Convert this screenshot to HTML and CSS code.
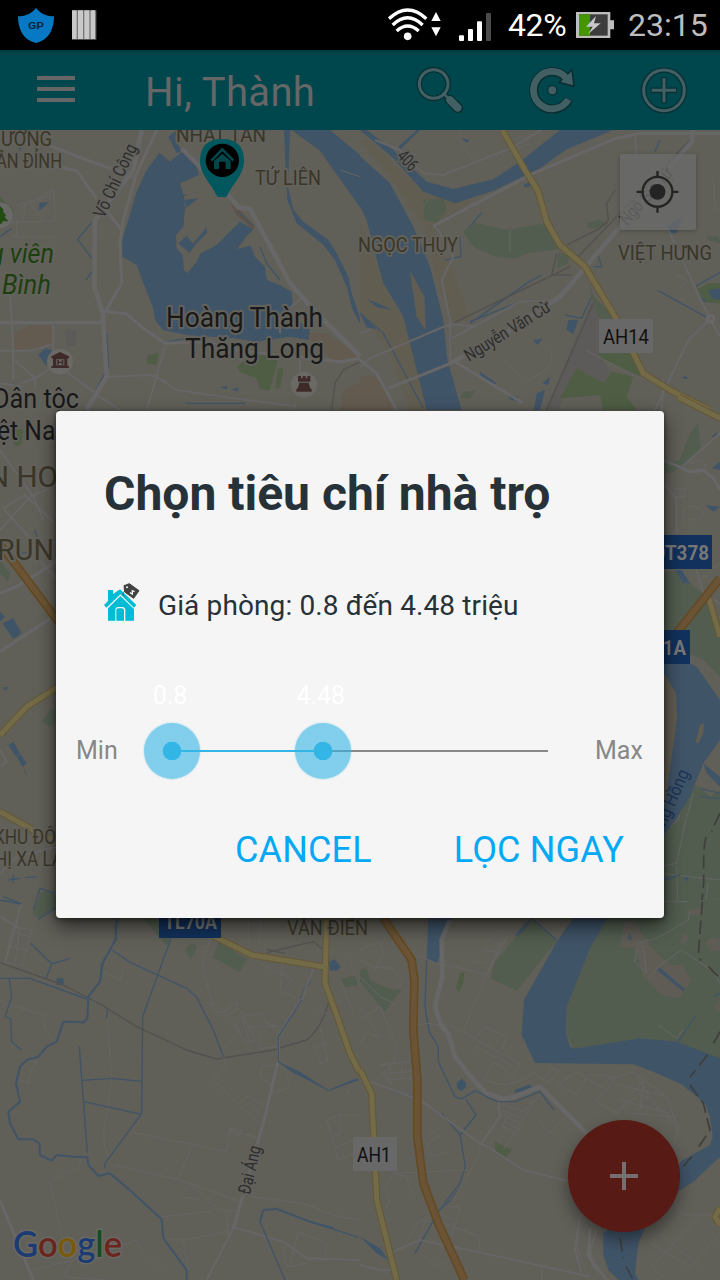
FILE: index.html
```html
<!DOCTYPE html>
<html lang="vi">
<head>
<meta charset="utf-8">
<title>Chọn tiêu chí nhà trọ</title>
<link rel="stylesheet" href="styles.css">
</head>
<body>
<div class="screen">
  <header class="status">
    <div class="status-group">
      <svg class="shield" viewBox="51 0 114 150"><path d="M108 23C98 38 78 49 54 49C54 88 70 121 108 129C146 121 162 88 162 49C138 49 118 38 108 23Z" fill="#0778c4"/><text class="shield-text" x="84" y="88" textLength="48" lengthAdjust="spacingAndGlyphs">GP</text></svg>
      <svg class="bars" viewBox="213 0 78 150"><path d="M216 31H289V119H216Z" fill="#777"/><path d="M216 31h14v86h-14zM234 31h15v86h-15zM253 31h15v86h-15zM272 31h13v86h-13z" fill="#c8c8c8"/></svg>
    </div>
    <div class="status-group status-right">
      <svg class="wifi" viewBox="84 0 162 150"><g fill="none" stroke="#fff" stroke-width="10"><path d="M87 56Q143 4 199 56"/><path d="M98 75Q143 32 188 75"/><path d="M110 93Q143 63 176 93"/></g><circle cx="143" cy="109" r="11.500" fill="#fff"/><path d="M228 36L242 63H214ZM214 82H242L228 109Z" fill="#fff"/></svg>
      <svg class="signal" viewBox="294 0 102 150"><g fill="#fff"><rect x="297" y="106" width="15" height="17" rx="3"/><rect x="324" y="87" width="15" height="36" rx="3"/><rect x="351" y="64" width="15" height="59" rx="3"/></g><rect x="378" y="39" width="15" height="84" rx="3" fill="#4b4b4b"/></svg>
      <span class="percent">42%</span>
      <svg class="battery" viewBox="645 0 120 150"><path d="M648 36H751V61H762V88H751V114H648Z" fill="#bdbdbd"/><rect x="657" y="43" width="86" height="64" fill="#3d3d3d"/><rect x="657" y="43" width="33" height="64" fill="#459600"/><path d="M708 48L678 80H698L684 103L722 70H702Z" fill="#c8c8c8"/></svg>
      <span class="clock">23:15</span>
    </div>
  </header>

  <div class="toolbar">
    <svg class="menu" viewBox="111 150 114 240"><path d="M111 228h114v12H111zM111 261h114v12H111zM111 294h114v12H111z" fill="#666"/></svg>
    <span class="greeting">Hi, Thành</span>
    <div class="actions">
      <svg viewBox="165 195 150 150"><g fill="none" stroke-linecap="round"><path d="M250 280L263 293" stroke="#0a3034" stroke-width="15"/><path d="M269 299L294 324" stroke="#0a3034" stroke-width="31"/><circle cx="221" cy="252" r="43" stroke="#0a3034" stroke-width="17"/><circle cx="221" cy="252" r="43" stroke="#426064" stroke-width="9"/><path d="M250 280L263 293" stroke="#426064" stroke-width="8"/><path d="M270 300L293 323" stroke="#426064" stroke-width="23"/></g></svg>
      <svg viewBox="501 195 150 150"><path d="M627 297A56 56 0 1 1 614 229" fill="none" stroke="#0a3034" stroke-width="28"/><path d="M597 247L636 209L642 259Z" fill="#426064" stroke="#0a3034" stroke-width="5" stroke-linejoin="round"/><path d="M625 298A56 56 0 1 1 618 233" fill="none" stroke="#426064" stroke-width="20"/><circle cx="577" cy="271" r="14" fill="#426064" stroke="#0a3034" stroke-width="4"/></svg>
      <svg viewBox="837 195 150 150"><g fill="none" stroke="#0a3034"><circle cx="912" cy="271" r="61" stroke-width="17"/><path d="M872 271H951M912 232V310" stroke-width="17"/></g><g fill="none" stroke="#426064"><circle cx="912" cy="271" r="61" stroke-width="9"/><path d="M875 271H948M912 235V307" stroke-width="9"/></g></svg>
    </div>
  </div>

  <main class="map">
    <svg class="canvas" viewBox="0 130 720 1150">
      <rect y="130" width="720" height="1150" fill="#605f58"/>

      <!-- north-west: lake, old quarter -->
      <g transform="translate(0 120) scale(.333333)">
        <path class="urban" d="M40 640L90 617L158 617V680L40 690ZM925 640L980 640L1080 710V720L1000 720L930 660ZM1030 810L1080 790V870H1020Z"/>
        <path class="water" d="M478 98L510 125L545 95L585 118L597 165L540 190L550 222L597 237L555 265L550 320L528 345L530 385L548 405L552 450L562 460L590 425L602 400L650 375L720 305L760 328L738 350L712 387L752 377L765 410L795 440L800 480L840 495L875 515L878 550L860 575L930 630L925 660L870 650L770 665L700 655L560 645L490 630L465 600L460 565L430 490L410 435L368 410L366 360L385 300L410 215L440 150ZM505 50L530 30L525 60L545 92L530 100Z"/>
        <path class="land" d="M552 228L597 215L600 245L555 262Z"/>
        <path class="water" d="M535 370L560 348L585 378L568 398ZM578 372L620 322V340L585 375ZM552 240L595 235L560 262ZM118 248L148 245L118 272ZM115 705L135 685L155 690L140 738ZM875 30L960 92L1080 262V105L990 30ZM852 30L870 30L864 200L880 270L910 305L985 360L1010 400L1045 470L1055 520L1080 595V610L1058 570L1040 500L1005 420L970 375L890 310L862 240ZM660 802L680 797L682 808ZM695 808L717 802L712 815Z"/>
        <path class="canal" d="M275 308L233 358L275 415M275 455L258 482M305 570L380 582L430 625L490 668L560 655M320 640L326 740L255 870M0 350L35 325M780 380L800 430L840 480M555 850H735M40 50L60 90L85 45"/>
        <path class="park" d="M712 740L760 700L830 697L832 730L808 812L780 808L770 775L720 755ZM832 745L850 745L840 805H826ZM442 705L475 700L470 735L442 730ZM0 230L40 270L40 290L0 300Z"/>
        <path class="grey" d="M197 630H228V675L197 680Z"/>
        <path class="shore" d="M690 250L710 285L760 330L765 318L715 265Z"/>
        <path class="canal" d="M714 275L758 318"/>
        <path class="lane" d="M60 265L160 208L165 302L0 308M50 255L155 225M70 300L75 250M35 350L165 352M50 305V350M90 250L130 300M1020 150L1080 170"/>
        <path class="street" d="M30 530L38 640L40 780M0 692H95L160 672V615M160 675V740L105 775V800M45 720L105 775L60 790M200 755L300 830L360 870M325 770L450 765L500 785M495 680L440 870M0 790L70 800M840 640L840 590L905 535M885 850L888 870M460 765L530 810L700 835L885 858M900 720V760"/>
        <path class="road" d="M120 65L260 120L400 170M110 130L230 152L285 230L365 330M470 30L408 165L370 300L360 370L365 490L318 572M0 608H305M305 572L380 582L430 625L495 670L620 665L700 690L1020 725L1080 715"/>
        <path class="main" d="M425 30L400 150L285 300L283 500L308 580L320 770L258 870M545 85L640 180L690 232L715 262L750 267L790 340L870 490L960 590L1080 708"/>
        <path class="rail" d="M1080 725L1030 750L1005 790L995 870"/>
        <g><circle cx="0" cy="286" r="39" fill="#696968"/><path d="M0 258L12 270L8 274L18 286L14 290L25 304H7V311H-5V258Z" fill="#224d12"/></g>
        <g><circle cx="180" cy="725" r="39" fill="#6b6965"/><path d="M154 715V709L180 696L207 709V715H202V738H207V744H154V738H159V715ZM169 718V736H193V718Z" fill="#3e2b29" fill-rule="evenodd"/><path d="M172 720h5v5h8v-5h5v14h-5v-5h-8v5h-5z" fill="#3e2b29"/></g>
        <g><circle cx="912" cy="794" r="39" fill="#6b6965"/><path d="M894 768h9v7h5v-7h9v7h5v-7h9v17h-37zM898 788h28l5 18h4v9h-46v-9h4z" fill="#3e2b29"/></g>
      </g>

      <!-- north-east: river branches, Long Biên -->
      <g transform="translate(360 120) scale(.333333)">
        <path class="urban" d="M0 770H55L100 870H0Z"/>
        <path class="sandbank" d="M0 60L90 170L200 330L225 460L280 610L330 600L270 430L215 320L340 240L290 248L190 215L25 60ZM0 300L60 470L130 600L170 740L200 870H150L90 700L0 570Z"/>
        <path class="water" d="M0 108L90 190L160 320L210 440L250 600L262 720L305 870H200L165 730L130 590L70 490L48 410L20 300L0 258ZM0 30H20L100 90L200 185L280 207L400 178L480 125L600 30H760L620 88L540 145L400 212L285 250L190 215L100 115ZM115 80L170 30H180L120 90ZM0 580L20 600L50 628L20 622ZM20 538L60 552L95 570L50 562ZM625 600H655L640 642L620 630ZM520 660L548 656L532 675ZM360 755L410 790L400 797L362 770ZM440 818L475 832V845L450 838ZM548 790L570 770L565 795ZM530 820L555 810L540 870H522ZM430 400L463 404L460 415L428 412ZM920 318L965 290L950 340H925ZM305 55L330 60L320 68ZM490 195L520 180L530 192L495 203ZM1030 505L1080 500V550L1030 545ZM965 775L975 767L987 777Z"/>
        <path class="sandbank" d="M150 453L193 530L197 630L170 590Z"/>
        <path class="canal" d="M365 278L320 330M300 350L303 410L255 420M695 530L665 595L615 585M715 408L725 440L700 440M895 512L1045 595M1080 458L1005 500L1030 545L1080 540M900 60L885 95M545 465L500 490L330 610M0 580L70 640L190 865M775 700L800 740M590 540L480 545L330 605"/>
        <path class="green" d="M190 240L250 235L260 270L230 308L195 300ZM310 335L345 308L440 330L560 310L610 375L620 385L500 400L465 415L410 412L340 380ZM680 310L715 300L745 310L720 325L685 325ZM595 395L630 410L625 430L590 445ZM1040 350L1075 350L1080 370L1045 360ZM685 490L705 535L775 600L715 600ZM310 815L345 812L330 835L300 835Z"/>
        <path class="grey" d="M695 545L720 600L718 700L750 755L730 790L650 745L595 870H555Z"/>
        <path class="park" d="M650 745L730 790L755 755L820 770L800 830L830 870H730L720 825L600 835ZM715 700H820L840 770L720 715ZM1010 510L1045 490L1080 490V505L1045 510L1055 535L1080 540V550L1040 545Z"/>
        <path class="rail" d="M700 550L560 870M283 608L630 440M620 375L720 325L745 300L740 250L765 210M575 465L590 400M575 465H635M990 60L655 410"/>
        <path class="lane" d="M470 85L510 70L490 50L460 60M300 30L300 65L345 125M450 330V400M435 725L495 780M560 685L575 700L570 740L510 780M1060 170L1065 270L1080 270M950 465L985 485L960 500M675 690L850 780M950 530L975 540M190 260L205 240"/>
        <path class="street" d="M45 60L120 90L190 160L250 165L450 85L545 30M220 318L235 330L280 410L245 480L270 600V720M0 740L30 715L270 612L350 620M275 655L480 545L590 540M30 630L0 640M825 45L830 110L890 160M880 305L925 330L1050 597L1080 650M1050 597L985 660L885 870M910 780L905 870"/>
        <path class="road" d="M1080 40H840L760 58L520 160L220 318M0 720L50 760L110 870M85 805L285 725L490 850"/>
        <path class="main" d="M1000 30L995 65L665 455L600 530L420 650L270 730"/>
        <path class="yellow-edge" d="M427 30L495 150L535 215L560 305L600 375L675 440L765 590L850 760L930 810L1050 870"/>
        <path class="yellow" d="M427 30L495 150L535 215L560 305L600 375L675 440L765 590L850 760L930 810L1050 870"/>
        <circle cx="1051" cy="597" r="11" fill="none" stroke="#6a696a" stroke-width="7"/>
      </g>

      <!-- west edge -->
      <g transform="translate(0 400) scale(.333333)">
        <path class="water" d="M8 670L40 655L65 700L40 718ZM0 635L15 650L0 665ZM25 1035L40 1025L60 1060L48 1070ZM50 1070L62 1062L80 1090L68 1102ZM72 1105L82 1130L75 1120ZM8 862H26L15 872Z"/>
        <path class="park" d="M30 80L70 90L65 130L50 140L35 120Z"/>
        <path class="green" d="M0 480L30 520L25 545L0 520ZM125 965L150 930L175 920V965L150 980ZM120 1480L150 1470L175 1500V1530L110 1530Z"/>
        <path class="street" d="M0 150L100 290L130 360M10 325L75 285L165 370M10 325L85 410M0 390L90 290L170 255M0 1100L20 1085L0 1050M0 1420L50 1370L170 1340M120 480L170 540"/>
        <path class="road" d="M0 580L60 555L175 480M0 755L175 640"/>
        <path class="orange-edge" d="M0 435L40 485L175 665"/><path class="orange" d="M0 435L40 485L175 665"/>
        <path class="yellow-edge" d="M0 1005L80 920L175 860M0 1235L90 1285L175 1330"/><path class="yellow" d="M0 1005L80 920L175 860M0 1235L90 1285L175 1330"/>
        <path class="canal" d="M105 390L110 410M65 460L110 450M25 1440L60 1435M40 1425V1450M75 1433L110 1430M10 1490L60 1510M120 1465L165 1480M120 1465L100 1530"/>
      </g>

      <!-- east edge -->
      <g transform="translate(660 400) scale(.333333)">
        <path class="green" d="M115 70L122 150L65 200L30 220L0 210V195L60 180L90 100ZM0 520L60 510L100 560L150 590L180 690V830L130 780L60 750L0 750ZM70 1150L120 1160L150 1190L180 1170V1560H0V1300L60 1260Z"/>
        <path class="water" d="M0 780H70L110 800L180 900V1020L130 1090L90 1190L50 1255L0 1320V850L50 880L55 950L20 1200L0 1260ZM155 110L172 95L168 115ZM155 205L180 185V210ZM135 315L180 320L160 335ZM45 510H65L90 550L70 550ZM130 1090L180 1130V1160L140 1120ZM70 1435L85 1425V1445Z"/>
        <path class="sand" d="M0 810L15 825L48 880L52 950L15 1210L0 1240ZM120 975L132 970L130 1000L115 1030L107 1025Z"/>
        <path class="lane" d="M45 265H75V290H45V265M60 260V290M70 330Q90 310 120 325Q140 345 120 360H70ZM90 190L130 180L140 210L100 220M0 1400L50 1390L75 1270L100 1180M0 1420L180 1440M50 1400L55 1560M130 1560L145 1450M0 1510L180 1500M110 550L180 490"/>
        <path class="street" d="M0 240L50 295V400M65 200L180 100M110 510L130 580L180 610"/><path class="road" d="M0 175L90 215L130 210L160 235L175 260L180 270"/>
        <path class="yellow-edge" d="M55 -10L180 55M145 590L180 710"/><path class="yellow" d="M55 -10L180 55M145 590L180 710"/>
        <path class="orange-edge" d="M45 705L180 535"/><path class="orange" d="M45 705L180 535"/>
        <path class="canal" d="M120 1165L180 1180M120 1190L180 1195M15 1440L60 1425M10 1440L25 1430"/>
        <path class="border" d="M180 1240Q160 1280 155 1295M138 1310Q130 1340 131 1400V1450Q125 1510 120 1560"/>
      </g>

      <!-- south-west -->
      <g transform="translate(0 900) scale(.333333)">
        <path class="green" d="M110 0H165V20L115 58L98 40ZM430 55L500 137L515 110L480 60ZM555 150L575 130L592 140L572 180ZM640 170L655 125L742 178L718 216L632 168ZM1022 238L1070 225L1080 255L1035 262Z"/>
        <path class="water" d="M170 235L190 235L192 255H170ZM988 185L1005 178L1022 200L1010 212H990ZM938 205L930 250L902 300L900 295L925 240ZM835 485L900 515L985 570L1070 535L1078 540L985 573L890 523Z"/>
        <path class="rail" d="M0 188L190 255L300 312L410 380L560 450L650 477L820 450L920 420Q965 385 985 310M800 148L855 160M800 158L940 125L965 145"/>
        <path class="lane" d="M0 300L50 320L130 345L135 385L155 420M65 480L110 485L95 510L85 550L60 540M38 80L95 88L70 195L15 190ZM50 100L90 110M35 140L80 150M60 80L45 190M320 330L335 535M335 535L320 640Q300 720 325 770M310 215L360 240L370 210M640 100L605 180L640 330L665 340L710 305L712 330L680 345M745 60V120M785 55L775 125M848 185L840 270L900 300M780 190L880 240L855 260M605 330L645 310L720 390L675 440M725 350L785 340L800 370L840 380M740 380L830 380M725 350L750 430M780 390V445L840 440M720 330L765 420L740 430L700 370M640 540L680 495L670 470M640 540L780 675M785 500Q770 540 810 550L820 580L870 560L850 490ZM720 610L740 588L790 615M750 605L780 640M395 697L680 755L690 685L725 690L715 710L690 695M690 690L770 712M575 740L535 835M345 795L540 840L720 905M540 890L570 850L620 900L670 935L710 930M545 890L600 900M150 845L240 800V770M150 845L185 1010M488 950L630 935L640 920M490 1020L550 1020L565 1110L545 1120M550 1022L680 995M680 935L685 1010M100 1110L220 1080L190 1130L320 1140M220 1080L410 1020L430 1060L500 1120M750 890L910 910L1000 945L1080 960M980 660L1015 645H1080M980 660L1015 780L1060 760M1020 650V705L995 710M1005 745L1060 720M1060 600L1040 570M985 300L1020 340L1010 350L950 330M960 380L970 430L985 485L960 490L945 440L980 430M1020 240L1060 340M1045 170L1080 260M870 1090L895 995L980 1030L975 1075L920 1080M850 1040L860 1100L920 1090"/>
        <path class="street" d="M0 50L60 85M65 10L15 190M700 985L620 1140M700 982L850 1025L920 1075L1080 1080M940 205L905 300"/>
        <path class="road" d="M0 900L100 1140M835 480L795 650L725 900L700 985M905 300L880 335L835 410V480"/>
        <path class="canal" d="M0 235H90L260 297M28 237L35 290L15 350L32 357L35 425L65 450M92 130L155 192L210 175M155 192L138 235M355 55L345 85L348 120L305 190L300 245L265 290M337 150L390 187L560 265L590 292L640 390L670 470M513 115L428 350L425 640L315 790V805M238 440L262 760M248 541L335 535L425 544M252 605L425 643M322 325L320 355M1075 1012L930 965M780 965L855 1140M835 410L905 300M835 410V485L890 523M0 0L65 12M115 58L165 25"/>
        <path class="stream" d="M350 60L347 118L308 190L300 245L265 290L262 355L250 367L190 365L170 425L140 440L115 470L80 480L60 500L48 550L60 605L25 635L30 670L55 718L100 718L118 730L120 765L155 782L170 765L220 770L262 772L265 795L295 828L330 820L400 880L485 958L490 1015L560 1110V1140M1000 985L930 965L830 927L790 930L780 965"/>
        <path class="yellow-edge" d="M640 108L755 165L970 200M980 55L975 250L1010 345L1050 460L1080 520"/><path class="yellow" d="M640 108L755 165L970 200M980 55L975 250L1010 345L1050 460L1080 520"/>
      </g>

      <!-- south-east -->
      <g transform="translate(360 900) scale(.333333)">
        <path class="green" d="M735 55L912 20V0H1080V475L950 430L840 415L640 447L620 400V320L650 230L690 145ZM515 58L592 120L470 272L392 235L405 185L460 120ZM0 210L20 205L30 240L95 270L125 268L75 335L0 245Z"/>
        <path class="park" d="M405 725L455 750L435 775L405 760ZM300 220L313 215L310 250L298 275L288 265Z"/>
        <path class="village" d="M795 60L825 65L850 110L885 155L930 195L965 195L995 240L955 295L905 285L850 230L825 145L778 140ZM1035 130L1060 110L1080 120V150L1055 155ZM990 30L1030 22L1030 45H990ZM970 100L985 110L975 135L960 125ZM1060 320L1080 300V335Z"/>
        <path class="water" d="M640 55H742L690 145L620 320L618 400L630 440L642 446L840 415L950 425L1080 475V770L1000 845L945 880L960 785L1050 735L1058 710L1050 650L1035 610L965 553L880 515L820 493L525 489L485 405L492 300L590 125ZM205 55H278L250 90L240 170L230 190L200 175ZM730 1000L745 985H855L835 1030L825 1120L835 1140H775L745 1110L730 1065ZM465 105L505 60L512 65L475 108ZM290 548L305 536L318 548V562L305 574L292 565ZM465 570L510 553L515 562L465 580ZM890 210L900 203L975 268L970 275ZM803 118L808 98L817 120ZM270 900L315 840L270 905L235 935ZM0 1010L60 1045L85 1080L50 1060ZM30 545L120 575L185 597L120 582Z"/>
        <path class="canal" d="M200 175L195 320L207 395L235 440V485L285 590L305 597L345 572L410 605H465L540 575L583 632M318 598L348 645L300 705M245 640L300 705L316 800L300 850L235 935L165 1060M515 55L590 120M1005 350L955 425M1080 280L1060 290"/>
        <path class="lane" d="M0 150L60 125L70 165L45 210M0 180L40 200L95 205L130 245L110 262M0 230L60 290L100 310M0 320L60 410L20 400L0 430M10 350L60 320L110 440L100 490L70 520L100 560M60 495L150 485M65 520L155 515M75 540L155 535M90 490V550M125 490V545M165 165L230 190L350 215L380 225L440 110M410 95L435 95L380 225L310 390M385 120L415 130M375 150L410 155M345 185L375 190M170 375L200 370L240 375M240 375L270 375L480 490L460 525L400 485M350 410L375 380L440 410L425 450M345 440L455 495M400 485L370 540L430 555L490 540L520 515L550 540M550 540L570 505L595 510L590 525L555 550M595 550L655 515L680 535L650 585ZM680 525L740 525L760 540L740 570L680 535M740 540L820 515L920 590L955 690L940 735M740 570L705 600L770 640L850 540M760 550L920 590M770 640L840 580L870 600M780 600L930 640M830 530L890 620L950 680M810 640L950 650M850 545L840 630M540 660L565 700L620 650M430 750L540 580M425 630L490 660M440 650L425 690M440 650L490 675M435 665L480 690M430 680L475 705M420 610L490 635L520 600M360 740V760L280 900M205 710L220 695L235 710L200 730L220 770L260 755M100 820L320 810M75 860L100 820L140 830L155 885M80 870L90 910L50 950M140 1025L180 960L215 965M255 920L300 920L275 1010M235 940L285 960M180 1060L235 1100L300 1060M175 1020L200 950L360 1010L355 1055M940 900L970 945L1080 945M1025 945L940 1030L875 1100L920 1140M870 1030L990 1100L1080 1000M900 1000L1020 1100M895 375L950 415L968 390M830 145L825 185L860 220L850 145L830 130L890 115L985 60L990 30M965 150L900 195L870 230M965 150L1060 215L1080 250M660 945L650 1040L680 1120M545 1100V1140M905 5L985 5"/>
        <path class="street" d="M0 540L30 545L180 600L360 730L375 735L490 810L620 842M415 605L420 650L360 735M100 1055L180 1020L350 1055L690 1130M0 1095L60 1110H110M660 945L645 1050L665 1120M710 990L690 1050L700 1100L745 1140"/>
        <path class="main" d="M270 60L245 120L247 230L225 320L245 380L265 400L285 470L340 540L380 580L430 597L465 590L540 560L680 700"/>
        <path class="road" d="M690 985L685 1070L740 1140"/>
        <path class="yellow-edge" d="M0 510L35 580L50 900L110 1140M1080 925L1065 950L1080 975"/><path class="yellow" d="M0 510L35 580L50 900L110 1140M1080 925L1065 950L1080 975"/>
        <path class="orange-edge" d="M70 55L155 180L163 240L160 390L172 540V710L190 850L235 970L313 1140"/><path class="orange" d="M70 55L155 180L163 240L160 390L172 540V710L190 850L235 970L313 1140"/>
        <path class="border" d="M1027 5L1015 160L1022 182M1045 200L1080 235M1080 395L1055 440M1042 465L990 532M990 555L1030 610L1050 690L1010 750M995 770L960 810M780 1015L790 1075M798 1100L820 1140"/>
      </g>

      <g class="labels district">
        <text x="-12" y="146" textLength="64" lengthAdjust="spacingAndGlyphs">HƯỜNG</text>
        <text x="-4" y="168" textLength="66" lengthAdjust="spacingAndGlyphs">ÂN ĐỈNH</text>
        <text x="176" y="142" textLength="90" lengthAdjust="spacingAndGlyphs">NHẬT TÂN</text>
        <text x="255" y="185" textLength="66" lengthAdjust="spacingAndGlyphs">TỨ LIÊN</text>
        <text x="358" y="252" textLength="100" lengthAdjust="spacingAndGlyphs">NGỌC THỤY</text>
        <text x="618" y="260" textLength="94" lengthAdjust="spacingAndGlyphs">VIỆT HƯNG</text>
        <text class="big" x="-12" y="487" textLength="110" lengthAdjust="spacingAndGlyphs">N HOÀN</text>
        <text class="big" x="-3" y="560" textLength="57" lengthAdjust="spacingAndGlyphs">RUN</text>
        <text x="-6" y="844" textLength="62" lengthAdjust="spacingAndGlyphs">KHU ĐÔ</text>
        <text x="-5" y="866" textLength="68" lengthAdjust="spacingAndGlyphs">HỊ XA LA</text>
        <text x="287" y="935" textLength="81" lengthAdjust="spacingAndGlyphs">VĂN ĐIỂN</text>
      </g>
      <g class="labels place">
        <text x="166" y="327" textLength="157" lengthAdjust="spacingAndGlyphs">Hoàng Thành</text>
        <text x="185" y="358" textLength="139" lengthAdjust="spacingAndGlyphs">Thăng Long</text>
        <text x="-7" y="408" textLength="86" lengthAdjust="spacingAndGlyphs">Dân tộc</text>
        <text x="-3" y="440" textLength="80" lengthAdjust="spacingAndGlyphs">ệt Nam</text>
      </g>
      <g class="labels parkname">
        <text x="-10" y="263" textLength="64" lengthAdjust="spacingAndGlyphs">g viên</text>
        <text x="2" y="294" textLength="49" lengthAdjust="spacingAndGlyphs">Bình</text>
      </g>
      <g class="labels streetname">
        <text transform="translate(104 219) rotate(-65)" textLength="79" lengthAdjust="spacingAndGlyphs">Võ Chí Công</text>
        <text transform="translate(396 157) rotate(47)" textLength="21" lengthAdjust="spacingAndGlyphs">406</text>
        <text transform="translate(469 362) rotate(-32)" textLength="98" lengthAdjust="spacingAndGlyphs">Nguyễn Văn Cừ</text>
        <text transform="translate(627 226) rotate(-48)" textLength="70" lengthAdjust="spacingAndGlyphs">Ngô Gia Tự</text>
        <text transform="translate(250 1195) rotate(-77)" textLength="49" lengthAdjust="spacingAndGlyphs">Đại Áng</text>
        <text class="river" transform="translate(658 844) rotate(-66)" textLength="78" lengthAdjust="spacingAndGlyphs">Sông Hồng</text>
      </g>
      <g class="badges">
        <path d="M599 319h54v34h-54zM353 1137h44v34h-44z" fill="#686868"/>
        <text x="603" y="344" textLength="46" lengthAdjust="spacingAndGlyphs">AH14</text>
        <text x="357" y="1162" textLength="34" lengthAdjust="spacingAndGlyphs">AH1</text>
        <path d="M640 535h72v34h-72zM640 630h50v34h-50zM159 904h62v34h-62z" fill="#12315c"/>
        <g class="white"><text x="653" y="560" textLength="56" lengthAdjust="spacingAndGlyphs">ĐT378</text><text x="652" y="655" textLength="34" lengthAdjust="spacingAndGlyphs">01A</text><text x="164" y="929" textLength="53" lengthAdjust="spacingAndGlyphs">TL70A</text></g>
      </g>
      <text class="google" x="13" y="1257" textLength="109" lengthAdjust="spacingAndGlyphs"><tspan fill="#1c3b72">G</tspan><tspan fill="#6b251d">o</tspan><tspan fill="#785a0a">o</tspan><tspan fill="#1c3b72">g</tspan><tspan fill="#164d25">l</tspan><tspan fill="#6b251d">e</tspan></text>
      <g transform="translate(0 120) scale(.333333)"><path d="M600 124Q600 57 666 57Q732 57 732 124C732 165 695 195 683 225Q680 231 675 231H657Q652 231 649 225C637 195 600 165 600 124Z" fill="#00575e"/><circle cx="667" cy="121" r="50"/><path d="M634 122L667 88L700 122" fill="none" stroke="#00474c" stroke-width="8"/><path d="M642 123L667 101L692 123V147H677V125H657V147H642Z" fill="#00474c"/></g>
    </svg>
    <div class="locate"><svg viewBox="829 150 130 130"><g fill="none" stroke="#242424" stroke-width="7"><circle cx="894" cy="216" r="45"/><path d="M894 153V173M894 259V279M831 216H849M939 216H957"/></g><circle cx="894" cy="216" r="24" fill="#242424"/></svg></div>
    <div class="fab"><svg viewBox="0 0 28 28"><path d="M12 0h4v12h12v4H16v12h-4V16H0v-4h12z" fill="#757070"/></svg></div>
  </main>

  <section class="dialog">
    <h1 class="title">Chọn tiêu chí nhà trọ</h1>
    <div class="price">
      <svg class="house" viewBox="27 36 108 117"><path d="M39 57H54V69L75 55L124 102L117 110L76 70L34 110L27 102L39 90Z" fill="#00bcd4"/><path d="M76 75L117 114V149H91V115Q89 108 82 108H68Q61 109 61 116V149H39V112Z" fill="#00bcd4"/><path d="M64 149V118Q64 112 70 112H80Q87 112 87 118V149Z" fill="#00bcd4"/><path d="M87 44L103 38L132 59L116 82L89 63Z" fill="#424242" stroke="#424242" stroke-width="3" stroke-linejoin="round"/><path d="M91 58Q77 70 89 76" fill="none" stroke="#424242" stroke-width="2"/><circle cx="96" cy="49" r="3" fill="#f5f5f5"/><path d="M105 65L112 69L112 59L119 62" fill="none" stroke="#f5f5f5" stroke-width="4"/></svg>
      <span class="price-text">Giá phòng: 0.8 đến 4.48 triệu</span>
    </div>
    <div class="range">
      <span class="limit min">Min</span>
      <div class="track">
        <div class="selected"></div>
        <div class="thumb low"><span class="value">0.8</span></div>
        <div class="thumb high"><span class="value">4.48</span></div>
      </div>
      <span class="limit max">Max</span>
    </div>
    <div class="buttons"><span class="cancel">CANCEL</span><span class="apply">LỌC NGAY</span></div>
  </section>
</div>
</body>
</html>
```
FILE: styles.css
```css
* { box-sizing: border-box; }
body { margin: 0; font-family: Roboto, "Noto Sans", sans-serif; background: #000; }
svg { display: block; flex: none; }
.screen { position: relative; width: 720px; height: 1280px; overflow: hidden; display: flex; flex-direction: column; }

.status { height: 50px; display: flex; justify-content: space-between; padding: 0 12px 0 17px; background: #000; }
.status-group { display: flex; gap: 16px; align-items: center; }
.status-right { gap: 0; font-size: 32px; line-height: 50px; color: #fff; }
.shield { width: 38px; height: 50px; }
.shield-text { font: bold 28px Roboto, sans-serif; fill: #06263f; }
.bars { width: 26px; height: 50px; }
.wifi { width: 54px; height: 50px; margin-right: 16px; }
.signal { width: 34px; height: 50px; margin-right: 16px; }
.percent { width: 67px; letter-spacing: -.4px; }
.battery { width: 40px; height: 50px; margin-right: 13px; }
.clock { width: 80px; color: #bdbdbd; white-space: nowrap; }

.toolbar { height: 80px; flex: none; display: flex; align-items: center; padding: 0 31px 0 37px; background: linear-gradient(#003d42, #00474d 6px); }
.menu { width: 38px; height: 80px; }
.greeting { margin-left: 70px; font-size: 40px; line-height: 80px; padding-top: 5px; letter-spacing: .35px; color: #666; white-space: nowrap; }
.actions { display: flex; gap: 62px; margin-left: auto; }
.actions svg { width: 50px; height: 50px; }

.map { position: relative; flex: 1; }
.canvas { width: 720px; height: 1150px; }
.land { fill: #605f58; }
.water { fill: #405468; }
.green { fill: #525d4f; }
.park { fill: #4f5d44; }
.urban { fill: #635a50; }
.village { fill: #5f5c56; }
.shore { fill: #605448; }
.grey { fill: #5c5b59; }
.sand, .sandbank { fill: #625d51; }
.canal, .stream, .rail, .lane, .street, .road, .main, .yellow, .yellow-edge, .orange, .orange-edge, .border { fill: none; stroke-linejoin: round; }
.canal { stroke: #405468; stroke-width: 4; }
.stream { stroke: #405468; stroke-width: 6; }
.rail { stroke: #525150; stroke-width: 4; }
.lane { stroke: #666565; stroke-width: 3; }
.street { stroke: #676667; stroke-width: 6; }
.road { stroke: #686768; stroke-width: 9; }
.main { stroke: #686768; stroke-width: 14; }
.yellow-edge { stroke: #655736; stroke-width: 21; }
.yellow { stroke: #736b47; stroke-width: 15; }
.orange-edge { stroke: #644922; stroke-width: 26; }
.orange { stroke: #6a5435; stroke-width: 17; }
.border { stroke: #3f3e3b; stroke-width: 5; stroke-dasharray: 40 17; }

.labels text { paint-order: stroke; stroke: #62615b; stroke-width: 4px; stroke-linejoin: round; }
.district { font-size: 20px; fill: #3a3628; }
.district .big { font-size: 30px; }
.place { font-size: 28px; fill: #181818; }
.parkname { font-size: 28px; font-style: italic; fill: #1d3f0e; }
.streetname { font-size: 18px; fill: #2d2d2d; }
.labels .river { fill: #1c3556; stroke: none; }
.badges { font-size: 20px; fill: #111; }
.white { fill: #777; font-weight: bold; }
.google { font-family: Lato, sans-serif; font-size: 37px; font-weight: 600; paint-order: stroke; stroke: #6a6964; stroke-width: 3px; }
.locate { position: absolute; left: 620px; top: 24px; width: 76px; height: 76px; padding: 16px; background: rgba(107, 107, 107, .75); box-shadow: 0 1px 4px rgba(0, 0, 0, .25); border-radius: 2px; }
.locate svg { width: 43px; height: 43px; }
.fab { position: absolute; right: 40px; bottom: 48px; width: 112px; height: 112px; display: grid; place-items: center; border-radius: 50%; background: #571a15; box-shadow: 0 8px 16px rgba(0, 0, 0, .4); }
.fab svg { width: 28px; height: 28px; }

.dialog { position: absolute; left: 56px; top: 411px; width: 608px; height: 507px; display: flex; flex-direction: column; background: #f5f5f5; border-radius: 4px; box-shadow: 0 8px 20px rgba(0, 0, 0, .6), 0 1px 5px rgba(0, 0, 0, .5); }
.title { margin: 49px 0 0 48px; font-size: 48px; line-height: 68px; font-weight: bold; color: #263238; white-space: nowrap; }
.price { display: flex; align-items: center; height: 40px; margin: 54px 0 0 48px; }
.house { width: 36px; height: 39px; }
.price-text { margin-left: 18px; padding-top: 7px; font-size: 28px; line-height: 36px; letter-spacing: .12px; color: #263238; white-space: nowrap; }
.range { display: flex; align-items: center; height: 56px; margin-top: 101px; padding: 0 20px; font-size: 25px; color: #878787; }
.limit { position: relative; top: -1px; }
.limit.min { width: 96px; }
.limit.max { margin-left: 47px; }
.track { position: relative; width: 376px; height: 2px; background: #888; }
.selected { width: 151px; height: 2px; background: #33b5e5; }
.thumb { position: absolute; top: -27px; width: 56px; height: 56px; margin-left: -28px; border-radius: 50%; background: radial-gradient(circle, #33b5e5 0 9px, rgba(51, 181, 229, .6) 9.6px); box-shadow: 0 0 2px rgba(51, 181, 229, .5); }
.low { left: 0; }
.high { left: 40.1%; }
.value { position: absolute; left: 50%; top: -43px; transform: translateX(calc(-50% - 2px)); font-size: 25px; line-height: 32px; color: #fff; }
.buttons { display: flex; justify-content: flex-end; gap: 82px; margin-top: 47px; padding-right: 40px; font-size: 36px; line-height: 48px; letter-spacing: .15px; color: #03a9f4; white-space: nowrap; }
```
